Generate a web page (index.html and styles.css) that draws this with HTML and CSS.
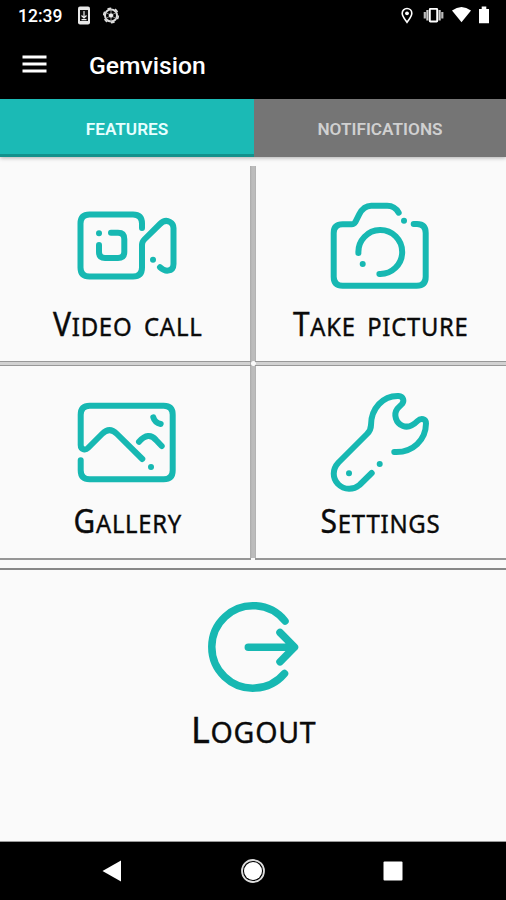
FILE: index.html
```html
<!DOCTYPE html>
<html lang="en">
<head>
<meta charset="utf-8">
<title>Gemvision</title>
<link rel="stylesheet" href="styles.css">
</head>
<body>
<div class="phone">
  <div class="status">
    <span class="time">12:39</span>
    <svg class="status-left" width="46" height="30" viewBox="76 0 46 30">
      <rect x="78" y="6.500" width="12" height="18" rx="2" fill="#e8e8e8"/>
      <rect x="80" y="10" width="8" height="11" fill="#111"/>
      <path d="M84 11v7M81.500 15.500l2.500 2.500 2.500-2.500M81.500 19.700h5" fill="none" stroke="#eee" stroke-width="1.200"/>
      <circle cx="111" cy="15.500" r="6" fill="none" stroke="#ddd" stroke-width="2"/>
      <circle cx="111" cy="15.500" r="7.300" fill="none" stroke="#ddd" stroke-width="1.600" stroke-dasharray="3.800 3.840"/>
      <circle cx="111" cy="15.500" r="2.200" fill="#eee"/>
      <path d="M111 9v4M111 18v4M105.500 12.300l3.500 2M113 16.800l3.500 2M105.500 18.700l3.500-2M113 14.300l3.500-2" stroke="#aaa" stroke-width=".8"/>
    </svg>
    <svg class="status-right" width="96" height="30" viewBox="398 0 96 30">
      <path d="M407 22.300c-2-2.700-4.800-5.800-4.800-9a4.800 4.800 0 0 1 9.600 0c0 3.200-2.800 6.300-4.800 9z" fill="none" stroke="#fff" stroke-width="1.600"/>
      <circle cx="407" cy="13.300" r="1.900" fill="#fff"/>
      <rect x="429.800" y="8.900" width="7.400" height="12.600" rx=".5" fill="none" stroke="#fff" stroke-width="1.900"/>
      <path d="M427.400 10v10.500M439.600 10v10.500" stroke="#ccc" stroke-width="2.200"/>
      <path d="M424.800 12v6.500M442.300 12v6.500" stroke="#bbb" stroke-width="2.200"/>
      <path d="M452 10.500q9.500-7 19 0L461.500 22.300z" fill="#fff"/>
      <path d="M479 9h2.700V6.500h4.600V9h2.700v14.300h-10z" fill="#fff"/>
    </svg>
  </div>
  <header class="appbar">
    <svg class="menu" width="25" height="20" viewBox="0 0 25 20"><path d="M.5 3h24M.5 10h24M.5 17h24" stroke="#fff" stroke-width="3"/></svg>
    <h1 class="title">Gemvision</h1>
  </header>
  <nav class="tabs">
    <div class="tab tab-active"><span class="tab-text">FEATURES</span></div>
    <div class="tab"><span class="tab-text">NOTIFICATIONS</span></div>
  </nav>
  <main class="grid">
    <section class="tile tile-top tile-left">
      <svg class="icon" width="111" height="104" viewBox="71 194 111 104">
        <path d="M142 228v-4.500q0-9-9-9H89.500q-9 0-9 9v44q0 9 9 9H133q9 0 9-9V245q0-3.200 2.300-5.500L160 224q5-5 10-2 3.500 2 3.500 6v36q0 6-5.500 6.600-4 .4-8-3.300"/>
        <path d="M111 232.700h7q6.300 0 6.300 6.300v13q0 6-6.300 6h-13q-6 0-6-6v-7"/>
        <path d="M99 233.300h.01M153 259.700h.01"/>
      </svg>
      <svg class="label" width="201" height="50" viewBox="26 298 201 50"><text x="53" y="336" textLength="149.500" lengthAdjust="spacingAndGlyphs">V<tspan class="small">IDEO CALL</tspan></text></svg>
    </section>
    <section class="tile tile-top tile-right">
      <svg class="icon" width="111" height="104" viewBox="324 194 111 104">
        <path d="M413.700 224H417q8.700 0 8.700 9v43.700q0 9-9 9h-74q-9 0-9-9V233q0-8.700 9-8.700h9q2.300 0 3.500-2l4-8q4.500-8.600 12-8.600h16q7.500 0 11.500 7"/>
        <path d="M358.400 253a21.900 21.900 0 1 1 21 20.900"/>
        <path d="M404 220.700h.01M362.700 264h.01"/>
      </svg>
      <svg class="label" width="241" height="50" viewBox="259 298 241 50"><text x="293" y="336" textLength="175.500" lengthAdjust="spacingAndGlyphs">T<tspan class="small">AKE PICTURE</tspan></text></svg>
    </section>
    <section class="tile tile-bottom tile-left">
      <svg class="icon" width="111" height="104" viewBox="71 391 111 104">
        <path d="M80.700 460.300v10q0 9 9 9h74q9 0 9-9v-55.600q0-9-9-9h-74q-9 0-9 9V445q0 3.500 3 4.300 2.500.5 4.300-1.300L102 434q7.500-7.500 15 0l25.300 25"/>
        <path d="M139 441.700q9.500-10.500 17-1.700l5.700 6M153.300 417.300q1.500 5.500 7.400 6.700M151 467h.01"/>
      </svg>
      <svg class="label" width="201" height="50" viewBox="26 495 201 50"><text x="73.500" y="532.700" textLength="108.500" lengthAdjust="spacingAndGlyphs">G<tspan class="small">ALLERY</tspan></text></svg>
    </section>
    <section class="tile tile-bottom tile-right">
      <svg class="icon" width="111" height="104" viewBox="324 391 111 104">
        <path d="M394.300 452c19 1 31.500-12.500 31.700-28.500 0-5-5-6-8.500-2.500C412.500 426 408.500 428 403 426c-7-2.600-10-11.500-5.500-17.500l4.500-4.500c2.500-3 1.500-7.500-3.500-8-15.500-.5-27.500 12.500-27.500 29 0 4-1.500 6.500-4 9l-28.500 28.500c-6.500 7-6 15.500-.5 21.500 6.500 6.500 15.500 6 21.500 1l12.200-12"/>
        <path d="M379.700 464h.01M349 473.300h.01"/>
      </svg>
      <svg class="label" width="201" height="50" viewBox="279 495 201 50"><text x="320.500" y="532.700" textLength="120" lengthAdjust="spacingAndGlyphs">S<tspan class="small">ETTINGS</tspan></text></svg>
    </section>
  </main>
  <section class="logout">
    <svg class="icon icon-logout" width="106" height="106" viewBox="200 595 106 106">
      <path d="M285 621a41.200 41.200 0 1 0-.5 52.500M248.300 647.200h46M280 632.500l14.500 14.700-14.500 14.600"/>
    </svg>
    <svg class="label label-logout" width="206" height="55" viewBox="150 701 206 55"><text x="191" y="743" textLength="125.500" lengthAdjust="spacingAndGlyphs">L<tspan class="small">OGOUT</tspan></text></svg>
  </section>
  <footer class="navbar">
    <svg width="22" height="24" viewBox="0 0 22 24"><path d="M1.500 12L20 1.500v21z" fill="#fff"/></svg>
    <svg width="26" height="26" viewBox="0 0 26 26"><circle cx="13" cy="13" r="11" fill="none" stroke="#ddd" stroke-width="1.800"/><circle cx="13" cy="13" r="9" fill="#fff"/></svg>
    <svg width="22" height="22" viewBox="0 0 22 22"><rect x="1.500" y="1.500" width="19" height="19" rx="1" fill="#fff"/></svg>
  </footer>
</div>
</body>
</html>
```

FILE: styles.css
```css
* { box-sizing: border-box; }
body { margin: 0; background: #000; font-family: Roboto, "Liberation Sans", sans-serif; }
svg { display: block; flex: none; }
.phone { width: 506px; height: 900px; display: flex; flex-direction: column; background: #fafafa; overflow: hidden; }
.status { height: 30px; flex: none; display: flex; align-items: center; padding: 0 12px 0 18px; background: #000; color: #fff; }
.time { width: 58px; font-size: 17.500px; font-weight: 500; line-height: 30px; padding-top: 2px; }
.status-right { margin-left: auto; }
.appbar { height: 69px; flex: none; display: flex; align-items: center; padding: 0 22px; background: #000; color: #fff; }
.menu { margin-bottom: 1px; }
.title { margin: 2px 0 0 42px; font-size: 24.700px; font-weight: 500; line-height: 30px; }
.tabs { height: 58px; flex: none; display: flex; box-shadow: 0 1px 4px rgba(0, 0, 0, .3); }
.tab { flex: auto; display: flex; align-items: center; justify-content: center; padding-top: 2px; background: #757575; color: #d0d0d0; font-size: 17.200px; font-weight: 600; }
.tab-active { flex: none; width: 254px; background: #1bbab5; border-bottom: 3px solid #13918c; color: #e8ffff; padding-top: 5px; }
.grid { margin-top: 9px; height: 394px; flex: none; display: grid; grid-template-columns: 251px 251px; grid-template-rows: 196px 195px; gap: 3px 4px; background: radial-gradient(circle at 253.500px 197.500px, #fafafa 2px, transparent 3px), linear-gradient(90deg, transparent 250px, #aaa 250px, #bcbcbc 252px, #bcbcbc 255px, #aaa 256px, transparent 256px) 0 0 / 506px 392px no-repeat, linear-gradient(#d2d2d2, #d2d2d2) 0 196px / 506px 3px no-repeat; }
.tile { display: flex; flex-direction: column; align-items: center; padding-top: 28px; }
.tile-left { padding-left: 2px; }
.tile-right { padding-right: 2px; }
.tile-top { border-bottom: 1px solid #989898; }
.tile-bottom { border-top: 1px solid #989898; border-bottom: 2px solid #969696; padding-top: 25px; }
.icon { fill: none; stroke: #17b8b2; stroke-width: 6; stroke-linecap: round; stroke-linejoin: round; }
.label { overflow: visible; font-family: "Noto Sans", "Open Sans", sans-serif; font-size: 32px; fill: #0a0a0a; stroke: #0a0a0a; stroke-width: .4px; letter-spacing: .8px; word-spacing: 5px; }
.small { font-size: 25.500px; }
.logout { flex: auto; margin-top: 8px; border-top: 2px solid #888; border-bottom: 1px solid #999; display: flex; flex-direction: column; align-items: center; padding-top: 25px; }
.icon-logout { stroke-width: 7.500; }
.label-logout { font-size: 37px; }
.label-logout .small { font-size: 29.500px; }
.navbar { height: 58px; flex: none; background: #000; display: flex; align-items: center; justify-content: space-between; padding: 0 102px 0 101px; }
```
